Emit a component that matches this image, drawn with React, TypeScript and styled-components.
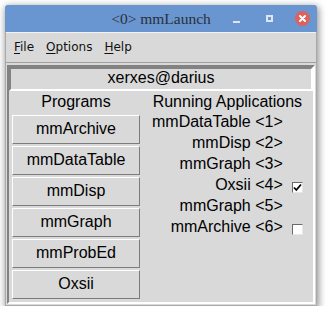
import * as React from "react";
import styled, { createGlobalStyle } from "styled-components";

interface IRunning {
  name: string;
  checked?: boolean;
}

const programs = ["mmArchive", "mmDataTable", "mmDisp", "mmGraph", "mmProbEd", "Oxsii"];

const running: IRunning[] = [
  { name: "mmDataTable <1>" },
  { name: "mmDisp <2>" },
  { name: "mmGraph <3>" },
  { name: "Oxsii <4>", checked: true },
  { name: "mmGraph <5>" },
  { name: "mmArchive <6>", checked: false }
];

const menus = [
  { key: "F", rest: "ile" },
  { key: "O", rest: "ptions" },
  { key: "H", rest: "elp" }
];

const App = () => (
  <>
    <GlobalStyle />
    <Desktop>
      <Window>
        <TitleBar>
          <span />
          <Title>{"<0> mmLaunch"}</Title>
          <Controls>
            <ControlSlot>
              <MinimizeGlyph />
            </ControlSlot>
            <ControlSlot>
              <MaximizeGlyph />
            </ControlSlot>
            <CloseButton>
              <svg width="7" height="7" viewBox="0 0 7 7">
                <path d="M1 1 L6 6 M6 1 L1 6" stroke="#fff" strokeWidth="2" strokeLinecap="round" />
              </svg>
            </CloseButton>
          </Controls>
        </TitleBar>
        <Client>
          <MenuBar>
            {menus.map(m => (
              <MenuItem key={m.key}>
                <Mnemonic>{m.key}</Mnemonic>
                {m.rest}
              </MenuItem>
            ))}
          </MenuBar>
          <Body>
            <Frame>
              <UserLabel>xerxes@darius</UserLabel>
              <Columns>
                <ProgramColumn>
                  <Heading>Programs</Heading>
                  {programs.map(p => (
                    <ProgramButton key={p}>{p}</ProgramButton>
                  ))}
                </ProgramColumn>
                <RunningColumn>
                  <RunningHeading>Running Applications</RunningHeading>
                  {running.map((r, idx) => (
                    <React.Fragment key={idx}>
                      <AppName>{r.name}</AppName>
                      {r.checked === undefined ? (
                        <span />
                      ) : (
                        <CheckBox>
                          {r.checked && (
                            <svg width="9" height="9" viewBox="0 0 9 9">
                              <path d="M1 4.5 L3.3 7 L8 1.5" fill="none" stroke="#000" strokeWidth="1.8" />
                            </svg>
                          )}
                        </CheckBox>
                      )}
                    </React.Fragment>
                  ))}
                </RunningColumn>
              </Columns>
            </Frame>
          </Body>
        </Client>
      </Window>
    </Desktop>
  </>
);

const GlobalStyle = createGlobalStyle`
  html, body {
    margin: 0;
    padding: 0;
    background: #ffffff;
  }
  body {
    font-family: "Liberation Sans", Arial, sans-serif;
    color: #000;
  }
`;

const Desktop = styled.div`
  padding: 5px 0 0 5px;
`;

const Window = styled.div`
  width: 312px;
  background: #d9d9d9;
  border-radius: 3px 3px 0 0;
  box-shadow: 1px 2px 7px 1px rgba(0, 0, 0, 0.42);
`;

const TitleBar = styled.div`
  height: 27px;
  display: grid;
  grid-template-columns: 1fr auto 1fr;
  align-items: center;
  background: #6996d0;
  border-radius: 3px 3px 0 0;
`;

const Title = styled.span`
  font-family: "Liberation Serif", "Times New Roman", serif;
  font-size: 15.5px;
  color: #2b2f3a;
  padding-top: 1px;
`;

const Controls = styled.div`
  justify-self: end;
  display: flex;
  align-items: center;
  gap: 18px;
  padding-right: 7px;
`;

const ControlSlot = styled.div`
  width: 15px;
  height: 15px;
  display: flex;
  align-items: center;
  justify-content: center;
`;

const MinimizeGlyph = styled.div`
  width: 7px;
  height: 2px;
  margin-top: 7px;
  background: #dce6f4;
`;

const MaximizeGlyph = styled.div`
  width: 7px;
  height: 7px;
  box-sizing: border-box;
  border: 2px solid #dce6f4;
`;

const CloseButton = styled(ControlSlot)`
  border-radius: 50%;
  background: #df615c;
`;

const Client = styled.div`
  border: 1px solid #a9a9a9;
  border-top: none;
`;

const MenuBar = styled.div`
  display: flex;
  gap: 12px;
  height: 29px;
  line-height: 29px;
  padding-left: 8px;
  border-top: 1px solid #f2f2f2;
  border-bottom: 1px solid #a0a0a0;
  font-family: "DejaVu Sans", sans-serif;
  font-size: 12px;
  color: #111;
`;

const MenuItem = styled.span``;

const Mnemonic = styled.span`
  text-decoration: underline;
  text-underline-offset: 2px;
`;

const Body = styled.div`
  padding: 2px 1px 1px;
`;

const Frame = styled.div`
  border: 2px solid;
  border-color: #828282 #ffffff #ffffff #828282;
`;

const UserLabel = styled.div`
  border: 2px solid;
  border-color: #828282 #ffffff #ffffff #828282;
  font-size: 16px;
  line-height: 18px;
  padding-bottom: 2px;
  text-align: center;
`;

const Columns = styled.div`
  display: flex;
  gap: 12px;
  padding: 2px 0 3px 3px;
`;

const ProgramColumn = styled.div`
  width: 128px;
  display: flex;
  flex-direction: column;
  gap: 2px;
`;

const Heading = styled.div`
  font-size: 16px;
  line-height: 18px;
  text-align: center;
  margin-bottom: 2px;
`;

const ProgramButton = styled.button`
  height: 29px;
  margin: 0;
  padding: 0 0 2px;
  border: 1px solid;
  border-color: #ffffff #7c7c7c #7c7c7c #ffffff;
  background: #d9d9d9;
  font-family: "Liberation Sans", Arial, sans-serif;
  font-size: 16px;
  line-height: 18px;
  color: #000;
`;

const RunningColumn = styled.div`
  display: grid;
  grid-template-columns: auto 11px;
  column-gap: 9px;
  align-content: start;
`;

const RunningHeading = styled(Heading)`
  grid-column: 1 / span 2;
  margin-bottom: 0;
`;

const AppName = styled.div`
  font-size: 16px;
  line-height: 21px;
  text-align: right;
  white-space: nowrap;
`;

const CheckBox = styled.div`
  width: 11px;
  height: 11px;
  box-sizing: border-box;
  margin-top: 8px;
  align-self: start;
  display: flex;
  align-items: center;
  justify-content: center;
  background: #fff;
  border: 1px solid;
  border-color: #6a6a6a #e6e6e6 #e6e6e6 #6a6a6a;
`;

export default App;
